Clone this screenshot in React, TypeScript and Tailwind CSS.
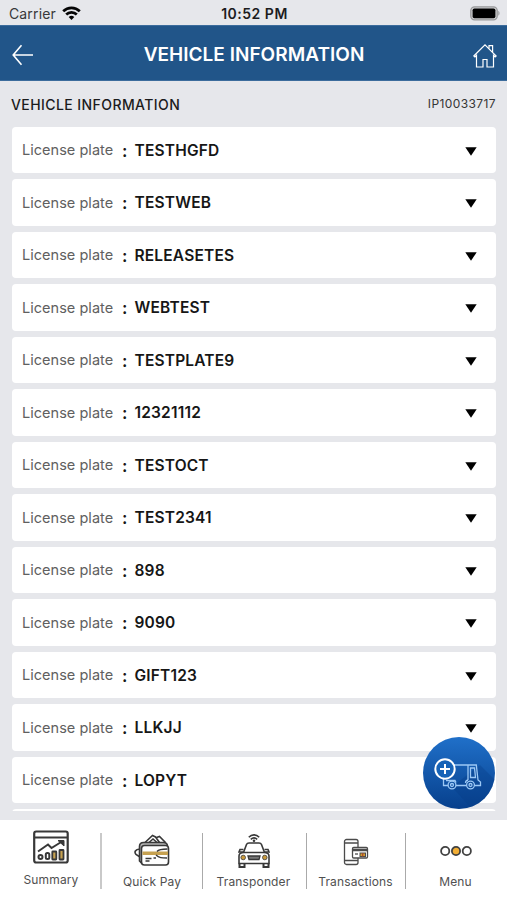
import { ReactNode } from "react";

const plates = [
    "TESTHGFD", "TESTWEB", "RELEASETES", "WEBTEST", "TESTPLATE9", "12321112", "TESTOCT",
    "TEST2341", "898", "9090", "GIFT123", "LLKJJ", "LOPYT",
];

const StatusBar = () => (
    <div className="h-[25px] shrink-0 grid grid-cols-3 items-center pt-[2px] pl-[9px] pr-[7px] text-[#1c1c1e]">
        <div className="flex items-center gap-[6px]">
            <span className="text-[14px] text-[#38383a] tracking-[0.14px]">Carrier</span>
            <svg width="19" height="15" viewBox="0 0 19 15" fill="none" stroke="#050505" strokeWidth="2.7">
                <path d="M1.2 5.3a11.8 11.8 0 0 1 16.6 0" />
                <path d="M4.2 8.5a7.5 7.5 0 0 1 10.6 0" />
                <path d="M9.5 14 6.7 11.1a4 4 0 0 1 5.6 0Z" fill="#050505" stroke="none" />
            </svg>
        </div>
        <span className="text-center text-[14px] font-semibold tracking-[0.5px] whitespace-nowrap">10:52 PM</span>
        <svg className="justify-self-end" width="30" height="15" viewBox="0 0 30 15">
            <rect x="0.8" y="0.8" width="26.4" height="13" rx="3.8" fill="#cfcfd0" stroke="#98999b" strokeWidth="1.3" />
            <rect x="2.6" y="2.4" width="22.8" height="9.8" rx="1.8" fill="#000" />
            <path d="M28.3 4.8c1.6.7 1.6 4.3 0 5Z" fill="#98999b" />
        </svg>
    </div>
);

const Header = () => (
    <header className="h-[56px] shrink-0 flex items-center justify-between bg-[#215589] border-y border-[#3c6c9c] pl-[12px] pr-[10px] pt-[4px] text-white">
        <svg width="23" height="22" viewBox="0 0 23 22" fill="none" stroke="currentColor" strokeWidth="1.6">
            <path d="M21 11H1.5M9.5 1.3 1.2 11l8.3 9.7" />
        </svg>
        <h1 className="text-[19px] leading-6 font-semibold tracking-[0.03px] whitespace-nowrap">VEHICLE INFORMATION</h1>
        <svg className="mt-px" width="24" height="26" viewBox="0 0 24 26" fill="none" stroke="currentColor" strokeWidth="1.2">
            <path d="M.8 13 12 1.8 23.2 13l-1.1 1-1.6-1.5V24H14v-7.5h-4V24H3.5V12.5L1.9 14Z" />
            <path d="M16 5.4V2.7h3.6v6.2" />
        </svg>
    </header>
);

const PlateRow = ({ plate }: { plate: string }) => (
    <div className="h-[46.5px] shrink-0 flex items-center rounded-[4px] bg-white pl-[10px] pr-[19px] pt-px">
        <span className="w-[99px] text-[14.5px] tracking-[0.03px] text-[#606060] whitespace-nowrap">License plate</span>
        <span className="w-[13.5px] pl-[1px] pt-[2px] text-[17px] font-semibold text-[#161616]">:</span>
        <span className="grow text-[15.5px] font-semibold tracking-[0.18px] text-[#161616]">{plate}</span>
        <svg className="mt-[2px]" width="12" height="9" viewBox="0 0 12 9">
            <path d="M.3.3h11.400L6 8.800Z" fill="#000" />
        </svg>
    </div>
);

const AddVehicle = () => (
    <button className="absolute left-[423px] top-[737px] size-[72px] rounded-full overflow-hidden bg-linear-to-b from-[#2070c9] to-[#07408d]">
        <svg width="72" height="72" viewBox="0 0 72 72" fill="none" stroke="#9cc8f5" strokeWidth="1.3">
            <path d="m29 50 28-22 15 15v30H50Z" fill="#053c86" stroke="none" opacity=".35" />
            <path d="M30 28h15M20.5 42v6.5H25M33 48.500h10M52 48.500h5.500V45l-2.500-2-1.700-15H45v15" />
            <path d="M47.500 31h4l1 9.500h-5Z" />
            <path d="M45 43c-2 .5-2.500 2-2.500 3M23 43.500h9l1 2" />
            <circle cx="29" cy="48" r="3.900" />
            <circle cx="29" cy="48" r="1.500" />
            <circle cx="47.500" cy="48" r="3.900" />
            <circle cx="47.500" cy="48" r="1.500" />
            <circle cx="22" cy="32" r="9.700" stroke="#fff" strokeWidth="2" fill="#1763b7" />
            <path d="M22 27v10M17 32h10" stroke="#fff" strokeWidth="2" />
        </svg>
    </button>
);

const SummaryIcon = () => (
    <svg className="shrink-0" width="36" height="34" viewBox="0 0 36 34" fill="none" stroke="#383838" strokeWidth="2">
        <rect x="1.2" y="1.5" width="33.5" height="31" rx="2" strokeWidth="2.2" />
        <path d="M1 7.500h34" />
        <path d="m5 21.500 10-7 3.500 3.500L29 11.500" />
        <path d="M25 10.500h6v5.500Z" fill="#383838" strokeWidth="1" />
        <circle cx="7.500" cy="27" r="2" />
        <rect x="12.800" y="23" width="3.500" height="6" rx="1.500" />
        <rect x="19.300" y="21.500" width="4" height="8" rx=".5" fill="#c6a150" strokeWidth="1.800" />
        <rect x="26.500" y="20" width="4" height="9.500" rx=".5" fill="#c6a150" strokeWidth="1.800" />
    </svg>
);

const QuickPayIcon = () => (
    <svg className="shrink-0" width="36" height="32" viewBox="0 0 36 32" fill="none" stroke="#383838" strokeWidth="1.600">
        <path d="M11 8.500 18.500 1.500l3 1.500 4 5.500M15 8.500l4-3.500 4 3.500M22.500 3.500l3-1 6 6M6 15c-5 .5-6 3-4 5.500l4 2.500" />
        <path d="M5.500 27V12.500c0-2.500 1.500-4 4-4h20c2.500 0 4 1.500 4 4v2H10l-2 2v13Z" fill="#b5b5b5" />
        <rect x="7.500" y="11.500" width="27" height="19.500" rx="3" fill="#fff" />
        <path d="M8.500 17.500h25.500v3.500H8.500Z" fill="#c6a150" stroke="none" />
        <path d="M23 17.500c1.500-2 5-2.500 10.500-2.500M22 21c3 3 6 3 11 3M11.500 24.500h6M11.500 27h4M19.500 24h2.500" strokeWidth="1.300" />
    </svg>
);

const TransponderIcon = () => (
    <svg className="shrink-0" width="36" height="36" viewBox="0 0 36 36" fill="none" stroke="#383838" strokeWidth="1.600">
        <path d="M12.800 4.300c3-3.200 7.400-3.200 10.400 0M14.800 6.300c2-1.800 4.400-1.800 6.400 0" />
        <circle cx="18" cy="7.800" r="1.300" fill="#383838" stroke="none" />
        <path d="m7.500 19.500 3-8c.5-1.200 1.200-1.500 2.500-1.500h10c1.300 0 2 .3 2.500 1.500l3 8" />
        <path d="M3 23c0-2.500 2-3.500 5-3.500h20c3 0 5 1 5 3.500v7.500H3Z" />
        <path d="M7.500 16.500H4l-1 2.500h4M28.500 16.500H32l1 2.500h-4" />
        <path d="M3.500 30.500V34h5v-3.500M27.500 30.500V34h5v-3.500" strokeWidth="2" />
        <path d="M12 23h12l-1 3.500H13Z" fill="#777" strokeWidth="1.300" />
        <circle cx="7.200" cy="24.500" r="2.300" fill="#c99a3c" strokeWidth=".8" />
        <circle cx="28.800" cy="24.500" r="2.300" fill="#c99a3c" strokeWidth=".8" />
    </svg>
);

const TransactionsIcon = () => (
    <svg className="shrink-0" width="26" height="28" viewBox="0 0 26 28" fill="none" stroke="#4b4b4b" strokeWidth="1.300">
        <rect x="1.500" y="1.500" width="13.500" height="25" rx="2" fill="#fff" />
        <path d="M1.500 5H15M1.500 22.500H15" />
        <rect x="9.500" y="9.500" width="15" height="10.500" rx="1.200" fill="#fff" />
        <path d="M9.500 12h15" strokeWidth="2.500" />
        <rect x="17" y="15" width="5.500" height="3.500" fill="#d59b2b" strokeWidth="1" />
        <path d="M19.700 15v3.500" stroke="#a94b32" />
        <path d="M12 16h3" />
    </svg>
);

const MenuIcon = () => (
    <svg className="shrink-0" width="32" height="12" viewBox="0 0 32 12" stroke="#414141" strokeWidth="1.800" fill="none">
        <circle cx="5.200" cy="6" r="4.100" />
        <circle cx="16" cy="6" r="4.100" fill="#f2ae35" />
        <circle cx="26.800" cy="6" r="4.100" />
    </svg>
);

interface TabProps {
    label: string;
    icon: ReactNode;
    className?: string;
    labelClass?: string;
}

const Tab = ({ label, icon, className = "", labelClass = "" }: TabProps) => (
    <div className={`h-[56px] flex flex-col items-center justify-end ${className}`}>
        {icon}
        <span className={`text-[12px] leading-[15px] tracking-[0.14px] text-[#505050] ${labelClass}`}>{label}</span>
    </div>
);

const TabBar = () => (
    <nav className="h-[80px] shrink-0 flex pt-[13px] bg-white">
        <Tab label="Summary" icon={<SummaryIcon />} className="w-[102px] border-r-2 border-[#c9c9c9] pl-[2px] pb-[2px]" labelClass="mt-[8px]" />
        <Tab label="Quick Pay" icon={<QuickPayIcon />} className="w-[101px] border-r border-[#aaa]" labelClass="mt-[8px]" />
        <Tab label="Transponder" icon={<TransponderIcon />} className="w-[104px] border-r border-[#aaa] pr-[2px]" labelClass="mt-[5px]" />
        <Tab label="Transactions" icon={<TransactionsIcon />} className="w-[99px] border-r border-[#aaa] pr-px" labelClass="mt-[8px]" />
        <Tab label="Menu" icon={<MenuIcon />} className="w-[101px] pr-[2px]" labelClass="mt-[17px]" />
    </nav>
);

export default function App() {
    return (
        <div className="relative flex flex-col w-[507px] h-[900px] overflow-hidden bg-[#e6e7eb] font-['Inter',sans-serif]">
            <StatusBar />
            <Header />
            <div className="h-[45.5px] shrink-0 flex items-center justify-between px-[11px] pt-px">
                <h2 className="text-[14px] font-medium tracking-[0.42px] text-[#1b1b1c]">VEHICLE INFORMATION</h2>
                <span className="text-[12px] tracking-[0.4px] text-[#353535]">IP10033717</span>
            </div>
            <main className="h-[684.5px] shrink-0 flex flex-col gap-[6px] pl-[12px] pr-[11px] overflow-hidden">
                {plates.map((plate) => (
                    <PlateRow key={plate} plate={plate} />
                ))}
                <div className="h-[46px] shrink-0 rounded-[4px] bg-white" />
            </main>
            <div className="grow" />
            <TabBar />
            <AddVehicle />
        </div>
    );
}
